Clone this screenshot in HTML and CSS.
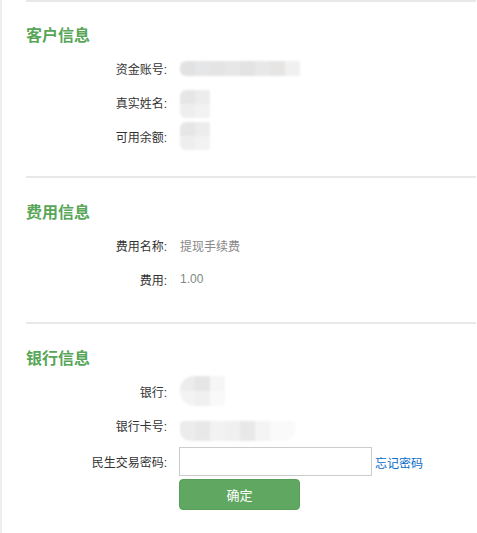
FILE: index.html
```html
<!DOCTYPE html>
<html lang="zh-CN">
<head>
<meta charset="utf-8">
<title>提现</title>
<link rel="stylesheet" href="styles.css">
</head>
<body>
<div class="page">
  <section class="block block-first">
    <h2 class="block-title">客户信息</h2>
    <div class="row"><span class="label">资金账号:</span><span class="mask mask-long"></span></div>
    <div class="row"><span class="label">真实姓名:</span><span class="mask mask-sq mask-down"></span></div>
    <div class="row"><span class="label">可用余额:</span><span class="mask mask-sq"></span></div>
  </section>
  <section class="block block-mid">
    <h2 class="block-title">费用信息</h2>
    <div class="row"><span class="label">费用名称:</span><span class="value">提现手续费</span></div>
    <div class="row"><span class="label">费用:</span><span class="value value-num">1.00</span></div>
  </section>
  <section class="block block-last">
    <h2 class="block-title">银行信息</h2>
    <div class="row"><span class="label">银行:</span><span class="mask mask-bank"></span></div>
    <div class="row"><span class="label">银行卡号:</span><span class="mask mask-card"></span></div>
    <div class="row row-input"><span class="label">民生交易密码:</span><input class="pwd" type="password"><a class="forgot" href="#">忘记密码</a></div>
    <div class="actions"><button class="btn" type="button">确定</button></div>
  </section>
</div>
</body>
</html>
```

FILE: styles.css
```css
html, body {
  margin: 0;
  padding: 0;
  background: #fff;
}
body {
  font-family: "Liberation Sans", "Noto Sans CJK SC", sans-serif;
  font-size: 12px;
  color: #333;
}
.page {
  border-left: 2px solid #eeeeee;
  padding-left: 24px;
  padding-right: 1px;
  min-height: 533px;
  box-sizing: border-box;
}
.block {
  border-top: 2px solid #e8e8e8;
  padding-top: 24px;
  padding-bottom: 23px;
}
.block-mid {
  padding-top: 25px;
  padding-bottom: 26px;
}
.block-last {
  padding-top: 25px;
  padding-bottom: 0;
}
.block-title {
  margin: 0 0 5px 0;
  font-size: 16px;
  line-height: 20px;
  font-weight: bold;
  color: #58a658;
}
.row {
  display: flex;
  align-items: center;
  height: 34px;
}
.label {
  width: 141px;
  text-align: right;
  margin-right: 12px;
  flex: none;
  color: #333;
}
.value {
  color: #888;
  padding-left: 1px;
}
.value-num {
  color: #7d8a86;
}
.mask {
  display: block;
  margin-left: 1px;
  filter: blur(1px);
  border-radius: 6px 2px 2px 6px;
}
.mask-long {
  width: 120px;
  height: 15px;
  background: linear-gradient(90deg, #e2e2e2 0 15px, #e5e6e8 15px 30px, #e4e4e4 30px 45px, #e7e7e7 45px 60px, #e3e3e3 60px 75px, #e8e8e8 75px 90px, #e6e5e4 90px 105px, #f0f0f0 105px 120px);
}
.mask-sq {
  width: 30px;
  height: 28px;
  background:
    linear-gradient(180deg, rgba(255,255,255,0) 0 50%, rgba(255,255,255,0.35) 50% 100%),
    linear-gradient(90deg, #e6e6e6 0 15px, #ececec 15px 30px);
}
.mask-down {
  margin-top: 4px;
}
.mask-bank {
  width: 45px;
  height: 30px;
  border-radius: 14px 2px 2px 14px;
  background:
    linear-gradient(180deg, rgba(255,255,255,0) 0 50%, rgba(255,255,255,0.4) 50% 100%),
    linear-gradient(90deg, #ececec 0 15px, #e6e6e6 15px 30px, #f6f6f6 30px 45px);
}
.mask-card {
  width: 115px;
  height: 20px;
  margin-top: 12px;
  border-radius: 4px 2px 10px 10px;
  background: linear-gradient(90deg, #ececec 0 15px, #e8e8e8 15px 30px, #f2f2f2 30px 45px, #f0f0f0 45px 60px, #e8e8e8 60px 75px, #f4f4f4 75px 90px, #fafafa 90px 115px);
}
.row-input {
  height: 29px;
  margin-top: 5px;
}
.pwd {
  width: 193px;
  height: 29px;
  box-sizing: border-box;
  border: 1px solid #cccccc;
  margin: 0;
  padding: 0 4px;
  background: #fff;
  outline: none;
}
.forgot {
  margin-left: 3px;
  color: #0a6cc8;
  text-decoration: none;
  padding-top: 2px;
}
.actions {
  padding-left: 153px;
  margin-top: 3px;
}
.btn {
  display: block;
  width: 121px;
  height: 31px;
  box-sizing: border-box;
  border: 1px solid #58a058;
  border-radius: 4px;
  background: #60a862;
  color: #fff;
  font-family: "Liberation Sans", "Noto Sans CJK SC", sans-serif;
  font-size: 13px;
  padding: 0;
  cursor: pointer;
}
```
